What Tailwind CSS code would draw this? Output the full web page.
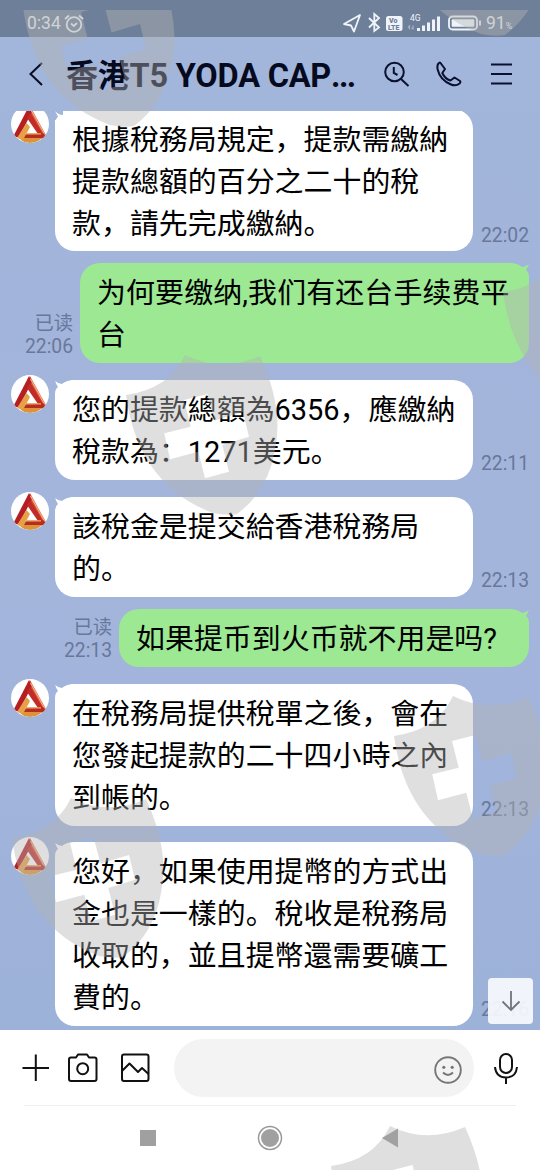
<!DOCTYPE html>
<html lang="zh">
<head>
<meta charset="utf-8">
<title>Chat</title>
<script src="https://cdn.jsdelivr.net/npm/@tailwindcss/browser@4"></script>
</head>
<body class="w-[540px] h-[1170px] overflow-hidden relative font-[Roboto,'Noto_Sans_CJK_SC',sans-serif] text-black">
<svg class="absolute size-0">
  <defs>
    <clipPath id="round"><circle cx="19" cy="19" r="19"/></clipPath>
    <symbol id="avatar" viewBox="0 0 38 38">
      <g clip-path="url(#round)">
        <rect width="38" height="38" fill="#fff"/>
        <path d="M8 32H32Q27 38 19 38T8 32Z" fill="#dc9438"/>
        <path d="M19 1L36 32L30 33L17 10Z" fill="#d9532f"/>
        <path d="M18 1L21 7L8 32H2Z" fill="#b51f24"/>
        <path d="M16 13L19.500 8L33 31L31 34L27 29Z" fill="#c22b27"/>
        <path d="M19.500 4L34.500 31" stroke="#f1b08a" stroke-width="1.200"/>
        <path d="M14 28.500H33L35 33H10Z" fill="#b72b22"/>
        <path d="M15.500 18L19 22L12 35L6 33Z" fill="#e6a046"/>
        <path d="M14 28.800H30" stroke="#f0b060" stroke-width="1.200"/>
      </g>
    </symbol>
    <symbol id="tail" viewBox="0 0 20 20"><path d="M.2 1Q3.500 4 7 4Q11 .5 18 0H20V20H0V14Q0 9 3 7Q1 4 .2 1Z" fill="currentColor"/></symbol>
    <symbol id="shield" viewBox="0 0 160 170" overflow="visible">
      <path fill-rule="evenodd" d="M1 45Q44 39 60 5Q96 23 135 6Q159 58 150 100Q143 141 112 164Q102 166 88 163Q13 135 1 45ZM39.300 83.300L45 109.300L73.300 101.700L80 128.300L104 121.700L97.300 95L124 86.700L118 62L89.500 70.500L82.500 44L59 50L65.700 76.700Z"/>
    </symbol>
  </defs>
</svg>

<div class="flex flex-col h-full bg-[#a2b5da]">
  <header class="shrink-0 h-[111px] relative z-10 bg-[#a2b5da]">
    <div class="h-[37px] bg-[#6e8099] text-[#e4e9f1] flex items-center pl-[27px] pr-[27px] pt-[10px]">
      <span class="text-[17.500px] leading-none">0:34</span>
      <svg class="ml-[3px] w-[20px] h-[20px]" viewBox="0 0 20 20" fill="none" stroke="currentColor" stroke-width="1.800"><circle cx="10" cy="10.500" r="7.300"/><path d="M1 5L5 1.500M19 5L15 1.500M7 9.500L9.800 12L13 9"/></svg>
      <svg class="ml-auto w-[142px] h-[24px]" viewBox="342 12 142 24" fill="none" stroke="#f0f4fa" stroke-width="1.800">
        <path d="M360 15L344 24L351 25.500L354 31.500Z" stroke-linejoin="round"/>
        <path d="M369 18L379 27.500L374.300 31V14L379 18L369 27.500"/>
        <rect x="386" y="16" width="16.500" height="15" rx="2.500" fill="#f0f4fa" stroke="none"/>
        <g fill="#6e8099" stroke="none" font-family="Roboto" font-weight="900"><text x="389" y="23" font-size="7">Vo</text><text x="388" y="30" font-size="7">LTE</text></g>
        <text x="410" y="20.500" font-size="8.500" fill="#f0f4fa" stroke="none" font-family="Roboto">4G</text>
        <path d="M409.500 29.500V26L408 27.500M413 25.500V29L411.500 28" stroke="#a5b3c8" stroke-width="1.200"/>
        <g stroke-width="3"><path d="M418.500 31V28M423.500 31V25.500M428.500 31V22.500M433.500 31V19.500M438.500 31V16.500"/></g>
        <rect x="449" y="16.500" width="28" height="13" rx="3.500"/><rect x="451.700" y="19.200" width="22.600" height="7.600" rx="1" fill="#f0f4fa" stroke="none"/><path d="M480 20.500V25.500"/>
      </svg>
      <span class="text-[17.500px] leading-none ml-[2px] w-[27px] whitespace-nowrap">91<span class="text-[9px]">%</span></span>
    </div>
    <div class="h-[74px] flex items-center pl-[28px] pr-[26px]">
      <svg class="w-[16px] h-[28px]" viewBox="0 0 16 28" fill="none" stroke="#080d24" stroke-width="2"><path d="M14 3L2.500 14L14 25"/></svg>
      <h1 class="ml-[22px] mt-[3px] w-[300px] text-[32.500px] leading-[40px] font-bold whitespace-nowrap tracking-[-0.200px] text-[#050a1e]"><span class="text-[32px]">香港</span>T5 YODA CAP<span class="tracking-[-1.600px]">...</span></h1>
      <svg class="ml-auto w-[132px] h-[30px]" viewBox="382 59 132 30" fill="none" stroke="#0a1030" stroke-width="2">
        <circle cx="394.500" cy="72" r="9.300"/><path d="M401 79L408.500 86M393.800 67V73L397.500 75"/>
        <path d="M440.500 63L445 69L442.300 73Q445 79 450.500 80.500L454.500 77.500L460 81Q461 82 459.500 83.500Q456 86.500 451 84.500Q440 80 437.500 69Q437 65 438.500 63.500Q439.500 62 440.500 63Z" stroke-linejoin="round"/>
        <path d="M491 64.500H512M491 74H512M491 83.500H512"/>
      </svg>
    </div>
  </header>

  <main class="h-[919px] shrink-0 overflow-hidden bg-linear-to-b from-[#a1b4da] via-[#a4b5dc] to-[#9db2d9] text-[28.950px] leading-[42px]">
    <div class="-mt-[2px] flex flex-col whitespace-nowrap">
      <div class="flex items-end pl-[11px]">
        <svg class="w-[38px] h-[38px] self-start -mt-[4px]"><use href="#avatar"/></svg>
        <div class="relative ml-[6px] w-[418px] bg-white rounded-[20px] rounded-tl-none [clip-path:inset(2px_0_0_0)] px-[17px] pt-[10px] pb-[6px]">根據稅務局規定，提款需繳納<br>提款總額的百分之二十的稅<br>款，請先完成繳納。<svg class="absolute left-0 top-[2px] w-[8px] h-[9px]" viewBox="0 0 8 9"><path d="M0 0Q3.500 4 8 4L12 0H0M0 0L3 5.500L0 10Z" fill="#a2b5da"/></svg></div>
        <span class="ml-[8px] mb-[4px] text-[19.300px] leading-[23px] text-[#68789a]">22:02</span>
      </div>
      <div class="mt-[12px] flex items-end justify-end pr-[11px]">
        <div class="mr-[7px] mb-[5px] text-right text-[19.300px] leading-[23px] text-[#68789a]">已读<br>22:06</div>
        <div class="relative w-[449px] bg-[#9ce893] rounded-[20px] px-[17px] pt-[9px] pb-[7px] tracking-[0.120px]"><svg class="absolute right-0 top-0 w-[20px] h-[20px] -scale-x-100 text-[#9ce893]"><use href="#tail"/></svg>为何要缴纳,我们有还台手续费平<br>台</div>
      </div>
      <div class="mt-[17px] flex items-end pl-[11px]">
        <svg class="w-[38px] h-[38px] self-start -mt-[5px]"><use href="#avatar"/></svg>
        <div class="relative ml-[6px] w-[418px] bg-white rounded-[20px] px-[17px] pt-[9px] pb-[7px]"><svg class="absolute left-0 top-0 w-[20px] h-[20px] text-white"><use href="#tail"/></svg>您的提款總額為6356，應繳納<br>稅款為：1271美元。</div>
        <span class="ml-[8px] mb-[5px] text-[19.300px] leading-[23px] text-[#68789a]">22:11</span>
      </div>
      <div class="mt-[17px] flex items-end pl-[11px]">
        <svg class="w-[38px] h-[38px] self-start -mt-[5px]"><use href="#avatar"/></svg>
        <div class="relative ml-[6px] w-[418px] bg-white rounded-[20px] px-[17px] pt-[9px] pb-[7px]"><svg class="absolute left-0 top-0 w-[20px] h-[20px] text-white"><use href="#tail"/></svg>該稅金是提交給香港稅務局<br>的。</div>
        <span class="ml-[8px] mb-[5px] text-[19.300px] leading-[23px] text-[#68789a]">22:13</span>
      </div>
      <div class="mt-[12px] flex items-end justify-end pr-[11px]">
        <div class="mr-[7px] mb-[5px] text-right text-[19.300px] leading-[23px] text-[#68789a]">已读<br>22:13</div>
        <div class="relative w-[410px] bg-[#9ce893] rounded-[20px] px-[17px] pt-[9px] pb-[7px]"><svg class="absolute right-0 top-0 w-[20px] h-[20px] -scale-x-100 text-[#9ce893]"><use href="#tail"/></svg>如果提币到火币就不用是吗?</div>
      </div>
      <div class="mt-[17px] flex items-end pl-[11px]">
        <svg class="w-[38px] h-[38px] self-start -mt-[5px]"><use href="#avatar"/></svg>
        <div class="relative ml-[6px] w-[418px] bg-white rounded-[20px] px-[17px] pt-[9px] pb-[7px]"><svg class="absolute left-0 top-0 w-[20px] h-[20px] text-white"><use href="#tail"/></svg>在稅務局提供稅單之後，會在<br>您發起提款的二十四小時之內<br>到帳的。</div>
        <span class="ml-[8px] mb-[5px] text-[19.300px] leading-[23px] text-[#68789a]">22:13</span>
      </div>
      <div class="mt-[16px] flex items-end pl-[11px]">
        <svg class="w-[38px] h-[38px] self-start -mt-[5px]"><use href="#avatar"/></svg>
        <div class="relative ml-[6px] w-[418px] bg-white rounded-[20px] px-[17px] pt-[9px] pb-[7px]"><svg class="absolute left-0 top-0 w-[20px] h-[20px] text-white"><use href="#tail"/></svg>您好，如果使用提幣的方式出<br>金也是一樣的。稅收是稅務局<br>收取的，並且提幣還需要礦工<br>費的。</div>
        <span class="relative ml-[8px] mb-[5px] text-[19.300px] leading-[23px] text-[#68789a]">22:16
          <span class="absolute left-[7px] -bottom-[3px] w-[45px] h-[46px] rounded-[4px] bg-[#f7f9fd]/93 flex items-center justify-center"><svg class="w-[20px] h-[22px]" viewBox="0 0 20 22" fill="none" stroke="#70747c" stroke-width="1.800"><path d="M10 1V20M1.500 11.500L10 20L18.500 11.500"/></svg></span>
        </span>
      </div>
    </div>
  </main>

  <footer class="grow bg-white">
    <div class="h-[75px] flex items-center pl-[22px] pr-[22px] pt-[1px]">
      <svg class="w-[130px] h-[32px]" viewBox="22 1053 130 32" fill="none" stroke="#111" stroke-width="2" stroke-linejoin="round">
        <path d="M22.500 1069H49M35.800 1055.500V1082"/>
        <path d="M71 1058.500H76L78 1055.500H87L89 1058.500H94.500Q96.500 1058.500 96.500 1060.500V1080Q96.500 1082 94.500 1082H71Q69 1082 69 1080V1060.500Q69 1058.500 71 1058.500Z"/><circle cx="82.700" cy="1069.700" r="5.500"/>
        <rect x="122" y="1055.500" width="26.500" height="26.500" rx="2"/><path d="M122 1072L129.500 1064.500L138 1073L142 1069L148.500 1075"/>
      </svg>
      <div class="ml-[22px] -mt-[1px] w-[300px] h-[58px] rounded-full bg-[#f3f3f3] flex items-center justify-end pr-[12px]">
        <svg class="w-[28px] h-[28px] mt-[4px]" viewBox="0 0 28 28" fill="none" stroke="#777" stroke-width="1.900"><circle cx="14" cy="14" r="12.800"/><path d="M9 16.500Q14 21.500 19 16.500"/><circle cx="9.800" cy="11.300" r="1.600" fill="#777" stroke="none"/><circle cx="18.200" cy="11.300" r="1.600" fill="#777" stroke="none"/></svg>
      </div>
      <svg class="ml-auto w-[24px] h-[32px]" viewBox="0 0 24 32" fill="none" stroke="#111" stroke-width="2"><rect x="6" y="2" width="12" height="19" rx="6"/><path d="M1 15Q2 25.500 12 25.500T23 15M12 25.500V32"/></svg>
    </div>
    <div class="mx-[24px] h-[65px] border-t border-[#efefef] flex items-center px-[116px]">
      <div class="w-[16px] h-[16px] bg-[#a0a0a0]"></div>
      <svg class="ml-[101px] w-[26px] h-[26px]" viewBox="0 0 26 26"><circle cx="13" cy="13" r="11.500" fill="none" stroke="#999" stroke-width="1.500"/><circle cx="13" cy="13" r="9" fill="#a0a0a0"/></svg>
      <svg class="ml-[99px] w-[16px] h-[20px] shrink-0" viewBox="0 0 16 20"><path d="M0 10L16 .500V19.500Z" fill="#949494"/></svg>
    </div>
  </footer>
</div>

<svg class="absolute left-0 top-[10px] w-[540px] h-[1160px] z-20 pointer-events-none overflow-hidden" viewBox="0 10 540 1160" fill="#b2b2b2" fill-opacity=".42">
  <use href="#shield" x="125" y="350" width="160" height="170"/>
  <use href="#shield" x="22" y="-38" width="160" height="170"/>
  <use href="#shield" x="393" y="-129" width="160" height="170"/>
  <use href="#shield" x="502" y="247" width="160" height="170"/>
  <use href="#shield" x="393" y="691" width="160" height="170"/>
  <use href="#shield" x="11" y="793" width="160" height="170"/>
  <use href="#shield" x="330" y="1121" width="160" height="170"/>
</svg>
</body>
</html>
